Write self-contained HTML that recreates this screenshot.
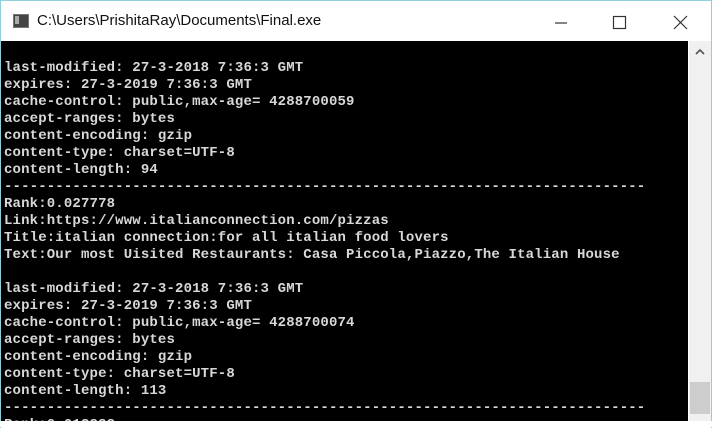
<!DOCTYPE html>
<html><head><meta charset="utf-8"><style>
html,body{margin:0;padding:0;width:712px;height:427px;overflow:hidden;background:#fff}
.win{position:absolute;left:0;top:0;width:710px;height:427px;border-left:1px solid #8fd0d8;border-right:1px solid #8fd0d8;border-top:1px solid #8fd0d8;background:#fff}
.title{position:absolute;left:36px;top:11px;font:15px "Liberation Sans",sans-serif;color:#111}
.icon{position:absolute;left:12px;top:13px;width:14px;height:12px;background:#444;border:1px solid #777}
.icon:before{content:"";position:absolute;left:1px;top:1px;width:4px;height:8px;background:#aaa}
.con{position:absolute;left:0;top:40px;width:687px;height:381px;background:#000;overflow:hidden}
pre{margin:0;position:absolute;left:3px;top:19px;font:bold 14px/17px "Liberation Mono",monospace;color:#d8d8d8;letter-spacing:0.15px}
.sb{position:absolute;left:688px;top:40px;width:22px;height:381px;background:#f0f0f0}
.thumb{position:absolute;left:1px;top:341px;width:20px;height:32px;background:#cdcdcd}
.bot{position:absolute;left:0;top:421px;width:712px;height:6px;background:#fff}
</style></head><body>
<div class="win">
<div class="icon"></div>
<div class="title">C:\Users\PrishitaRay\Documents\Final.exe</div>
<svg style="position:absolute;left:550px;top:12px" width="150" height="20">
<line x1="4" y1="10" x2="16" y2="10" stroke="#333" stroke-width="1.2"/>
<rect x="62.5" y="3.5" width="12" height="12" fill="none" stroke="#333" stroke-width="1.2"/>
<line x1="123" y1="3" x2="136" y2="16" stroke="#333" stroke-width="1.2"/>
<line x1="136" y1="3" x2="123" y2="16" stroke="#333" stroke-width="1.2"/>
</svg>
<div class="con"><pre>last-modified: 27-3-2018 7:36:3 GMT
expires: 27-3-2019 7:36:3 GMT
cache-control: public,max-age= 4288700059
accept-ranges: bytes
content-encoding: gzip
content-type: charset=UTF-8
content-length: 94
---------------------------------------------------------------------------
Rank:0.027778
Link:https://www.italianconnection.com/pizzas
Title:italian connection:for all italian food lovers
Text:Our most Uisited Restaurants: Casa Piccola,Piazzo,The Italian House

last-modified: 27-3-2018 7:36:3 GMT
expires: 27-3-2019 7:36:3 GMT
cache-control: public,max-age= 4288700074
accept-ranges: bytes
content-encoding: gzip
content-type: charset=UTF-8
content-length: 113
---------------------------------------------------------------------------
Rank:0.013888</pre></div>
<div class="sb"><svg width="22" height="20"><polyline points="7,13 11,9 15,13" fill="none" stroke="#555" stroke-width="1.6"/></svg><div class="thumb"></div></div>
</div>
<div class="bot"></div>
</body></html>
